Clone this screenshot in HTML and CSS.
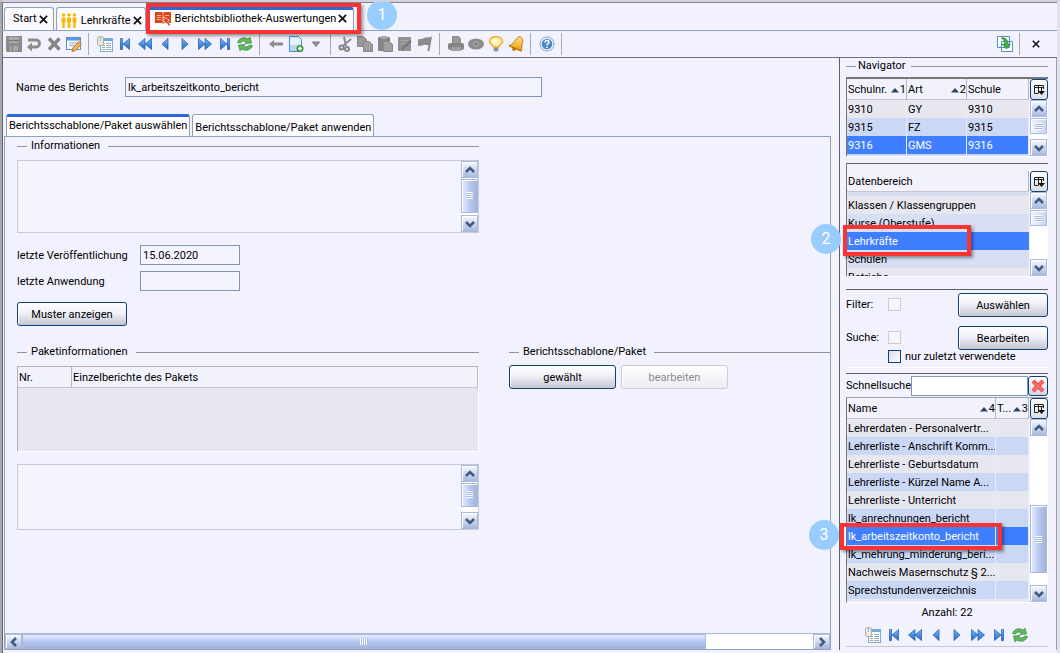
FILE: index.html
```
<!DOCTYPE html>
<html lang="de">
<head>
<meta charset="utf-8">
<title>Berichtsbibliothek-Auswertungen</title>
<link rel="stylesheet" href="styles.css">
</head>
<body>
<svg class="sprite" aria-hidden="true">
  <defs>
    <linearGradient id="blue" x1="0" y1="0" x2="0" y2="1"><stop offset="0" stop-color="#7db8f2"/><stop offset="1" stop-color="#1f66c8"/></linearGradient>
    <linearGradient id="gold" x1="0" y1="0" x2="0" y2="1"><stop offset="0" stop-color="#ffe27a"/><stop offset="1" stop-color="#e89a10"/></linearGradient>
  </defs>
  <symbol id="i-save" viewBox="0 0 16 16"><path fill="#8c8c8c" d="M0 0h16v16H1l-1-1z"/><path fill="#a9a9a9" d="M3 1h10v6H3zM4 10h8v5H4z"/><path stroke="#777" d="M3 4.500h10M6.500 10v5"/></symbol>
  <symbol id="i-undo" viewBox="0 0 16 16"><path fill="none" stroke="#8c8c8c" stroke-width="3" d="M2 4h8a3.500 3.500 0 0 1 0 7H5"/><path fill="#8c8c8c" d="M6 6.500v9L1 11z"/></symbol>
  <symbol id="i-delete" viewBox="0 0 16 16"><path stroke="#858585" stroke-width="3.500" d="M3 2.500l10.500 11M13.500 2.500L3 13.500"/></symbol>
  <symbol id="i-edit" viewBox="0 0 16 16"><rect x=".5" y="1.500" width="14" height="12" fill="#f4f9ff" stroke="#5c92cc"/><path fill="#5599e0" d="M1 2h13v2.500H1z"/><path stroke="#86aeda" d="M3 7h7M3 9.500h5"/><path fill="#f3b64b" stroke="#b5732a" d="M6.500 12.500l6-7 3 2.500-6 6.500-3.500 1z"/></symbol>
  <symbol id="i-table" viewBox="0 0 16 16"><rect x="3.500" y="2.500" width="12" height="13" fill="#fff" stroke="#7fa9d0"/><path stroke="#6faedb" stroke-width="2" d="M4 4h11"/><path stroke="#86b48a" d="M5 7.500h3M5 9.500h3M5 11.500h3M5 13.500h3"/><path stroke="#93addb" d="M9 7.500h5M9 9.500h5M9 11.500h5M9 13.500h5"/><rect x=".5" y=".5" width="6" height="9" rx="2" fill="#e9e9e2" stroke="#aaa"/><path stroke="#aaa" d="M3.500 1v4"/></symbol>
  <symbol id="i-first" viewBox="0 0 16 16"><path fill="url(#blue)" stroke="#2465bd" stroke-width=".8" d="M3.500 2.500h2v11h-2zM12.500 2.500v11L6 8z"/></symbol>
  <symbol id="i-rew" viewBox="0 0 16 16"><path fill="url(#blue)" stroke="#2465bd" stroke-width=".8" d="M8 2.500v11L1.500 8zM14.500 2.500v11L8 8z"/></symbol>
  <symbol id="i-prev" viewBox="0 0 16 16"><path fill="url(#blue)" stroke="#2465bd" stroke-width=".8" d="M11 2.500v11L5 8z"/></symbol>
  <symbol id="i-next" viewBox="0 0 16 16"><path fill="url(#blue)" stroke="#2465bd" stroke-width=".8" d="M5 2.500v11L11 8z"/></symbol>
  <symbol id="i-fwd" viewBox="0 0 16 16"><path fill="url(#blue)" stroke="#2465bd" stroke-width=".8" d="M1.500 2.500v11L8 8zM8 2.500v11L14.500 8z"/></symbol>
  <symbol id="i-last" viewBox="0 0 16 16"><path fill="url(#blue)" stroke="#2465bd" stroke-width=".8" d="M3.500 2.500v11L10 8zM10.500 2.500h2v11h-2z"/></symbol>
  <symbol id="i-refresh" viewBox="0 0 16 16"><path fill="#63b95c" stroke="#2f8438" stroke-width=".7" d="M.5 6.500C2 2 7 .5 11 3l2-1.700 1.500 5.700-6.500.5 1.500-1.700C7 4.500 4.500 5 3.500 7zM15.500 9.500C14 14 9 15.500 5 13l-2 1.700L1.500 9 8 8.500 6.500 10.200c2.500 1.300 5 .8 6-1.200z"/></symbol>
  <symbol id="i-back" viewBox="0 0 16 16"><path fill="#8c8c8c" d="M1 8l5-4v2.500h9v3H6V12z"/></symbol>
  <symbol id="i-new" viewBox="0 0 16 16"><path fill="#e8f3ff" stroke="#4a8fd6" d="M1.500.5h9l3 3v12h-12z"/><path fill="#b9d6f3" d="M2 9h11v6H2z"/><circle cx="12" cy="12.500" r="3.500" fill="#3d9a35"/><path stroke="#fff" stroke-width="1.500" d="M10 12.500h4M12 10.500v4"/></symbol>
  <symbol id="i-drop" viewBox="0 0 16 16"><path fill="#999" stroke="#777" d="M4.500 6h7L8 10.500z"/></symbol>
  <symbol id="i-cut" viewBox="0 0 16 16"><path stroke="#8c8c8c" stroke-width="2" d="M7 1l2 9M14 3L6 10"/><g fill="none" stroke="#858585" stroke-width="2"><circle cx="4.500" cy="11.500" r="2"/><circle cx="10" cy="13" r="2"/></g></symbol>
  <symbol id="i-copy" viewBox="0 0 16 16"><path fill="#999" stroke="#888" d="M.5.5h6l3 3v7h-9z"/><path fill="#a0a0a0" stroke="#888" d="M6.500 5.500h6l3 3v7h-9z"/></symbol>
  <symbol id="i-paste" viewBox="0 0 16 16"><rect x="1" y="1" width="12" height="14" rx="1" fill="#858585"/><path fill="#aaa" d="M4 0h6v3H4z"/><path fill="#a0a0a0" stroke="#888" d="M6.500 5.500h6l3 3v7h-9z"/></symbol>
  <symbol id="i-note" viewBox="0 0 16 16"><rect x="1" y="1" width="13" height="14" rx="1" fill="#919191"/><path stroke="#a6a6a6" d="M3 4.500h8M3 7.500h5"/><path stroke="#777" stroke-width="2" d="M5 13l9-8"/></symbol>
  <symbol id="i-flag" viewBox="0 0 16 16"><path fill="#8c8c8c" d="M1 3.500c2-1 4 0 6-1.500 2-1 4 0 8-1.500L12.500 15h-2.200L11.500 9c-2 .5-3-1-5 0-1.500 1-3 .5-5.500 1z"/></symbol>
  <symbol id="i-print" viewBox="0 0 16 16"><path fill="#999" stroke="#888" d="M4.500.5h6l2 2v5h-8z"/><rect x="0" y="7" width="16" height="7" rx="2" fill="#858585"/><path fill="#a0a0a0" d="M3 11h10v4H3z"/></symbol>
  <symbol id="i-eye" viewBox="0 0 16 16"><ellipse cx="8" cy="8" rx="8" ry="5.500" fill="#8c8c8c"/><circle cx="8" cy="8" r="3" fill="#a5a5a5"/><circle cx="8" cy="8" r="1.500" fill="#777"/></symbol>
  <symbol id="i-bulb" viewBox="0 0 16 16"><path fill="#ffeea0" stroke="#f0a83a" stroke-width="1.500" d="M5.500 11C5 9 1.500 8 1.500 5.500a6.500 5 0 0 1 13 0C14.500 8 11 9 10.500 11z"/><path fill="#fffbe0" d="M5 3h4v4H5z"/><path fill="#8c93a0" d="M5.500 11.500h5v2.500l-1 1.500h-3l-1-1.500z"/></symbol>
  <symbol id="i-bell" viewBox="0 0 16 16"><path fill="url(#gold)" stroke="#c77c0c" d="M12 .5c3.500 2 3 5.500 2 8l-.5 6.500L1 9.500C5 8.500 6 6 7.500 4 9 2 10 1 12 .5z"/><circle cx="6" cy="13" r="2" fill="#c77c0c"/><path stroke="#b56c08" d="M1 10l12 5"/></symbol>
  <symbol id="i-help" viewBox="0 0 16 16"><circle cx="8" cy="8" r="7" fill="#f4f8fd" stroke="#7fa3cc"/><circle cx="8" cy="8" r="5.300" fill="#4a86cc"/><path fill="none" stroke="#fff" stroke-width="1.500" d="M6 6.500c0-3 4-2.500 4-.3C10 7.500 8 7.500 8 9.200M8 10.500V12"/></symbol>
  <symbol id="i-export" viewBox="0 0 16 16"><path fill="#fff" stroke="#4e90ca" d="M.5.500h12v11H.5zM4.500 5.500h11v10h-11z"/><path fill="#49ad45" stroke="#2c8430" stroke-width=".6" d="M4 2c4-1 7 1 7 6h2.500L9.500 13 5 8h2.500C8 5.500 7 3.500 4 2z"/></symbol>
  <symbol id="i-close" viewBox="0 0 10 10"><path stroke="#111" stroke-width="2" d="M1 1l8 8M9 1L1 9"/></symbol>
  <symbol id="i-people" viewBox="0 0 16 16"><g fill="#f7b900"><circle cx="2.500" cy="2" r="1.700"/><circle cx="8" cy="2" r="1.700"/><circle cx="13.500" cy="2" r="1.700"/><path d="M.5 4.500h4v5h-.8V15H1.300V9.500H.5zM6 4.500h4v5h-.8V15H6.800V9.500H6zM11.500 4.500h4v5h-.8V15h-2.400V9.500h-.8z"/></g></symbol>
  <symbol id="i-book" viewBox="0 0 16 16"><path fill="#e0441c" d="M0 1h7l1 1 1-1h7v11H9l-1 1-1-1H0z"/><path stroke="#f6b8a4" d="M2 4.500h4M2 6.500h4M2 8.500h4M10 4.500h4M8 2v10"/><path fill="#d63e16" stroke="#fff" stroke-width=".6" d="M8.500 6l6 3-2 1 3 4-1.500 1.300-3-4-1.500 1.700z"/></symbol>
  <symbol id="i-columns" viewBox="0 0 12 12"><path fill="none" stroke="#222" d="M5 9.500H1.500v-8h9V5M1.500 3.500h9M5.500 1.500v8"/><path fill="#111" d="M5 7h7l-3.500 4zM8 4h1v3H8z"/></symbol>
  <symbol id="i-cross" viewBox="0 0 14 14"><path stroke="#dd4444" stroke-width="4" d="M2 2l10 10M12 2L2 12"/><path stroke="#ff6a62" stroke-width="2.500" d="M2 2l10 10M12 2L2 12"/></symbol>
  <symbol id="i-chev" viewBox="0 0 10 10"><path fill="none" stroke="#3f5a80" stroke-width="2.500" d="M1 7l4-4 4 4"/></symbol>
  <symbol id="i-sort" viewBox="0 0 8 5"><path fill="#2c4463" d="M4 0l4 4.500H0z"/></symbol>
</svg>

<div class="app">
  <nav class="tabs" aria-label="Fenster">
    <div class="tab"><span>Start</span><button class="tab-x" aria-label="Start schließen"><svg><use href="#i-close"/></svg></button></div>
    <div class="tab tab-low"><svg class="icon"><use href="#i-people"/></svg><span>Lehrkräfte</span><button class="tab-x" aria-label="Lehrkräfte schließen"><svg><use href="#i-close"/></svg></button></div>
    <div class="tab tab-active"><svg class="icon"><use href="#i-book"/></svg><span>Berichtsbibliothek-Auswertungen</span><button class="tab-x" aria-label="Auswertungen schließen"><svg><use href="#i-close"/></svg></button></div>
  </nav>

  <div class="toolbar">
    <button class="tool" aria-label="Speichern"><svg><use href="#i-save"/></svg></button>
    <button class="tool" aria-label="Rückgängig"><svg><use href="#i-undo"/></svg></button>
    <button class="tool" aria-label="Löschen"><svg><use href="#i-delete"/></svg></button>
    <button class="tool" aria-label="Bearbeiten"><svg><use href="#i-edit"/></svg></button>
    <i class="sep"></i>
    <button class="tool" aria-label="Liste"><svg><use href="#i-table"/></svg></button>
    <button class="tool" aria-label="Erster"><svg><use href="#i-first"/></svg></button>
    <button class="tool" aria-label="Schnell zurück"><svg><use href="#i-rew"/></svg></button>
    <button class="tool" aria-label="Zurück"><svg><use href="#i-prev"/></svg></button>
    <button class="tool" aria-label="Weiter"><svg><use href="#i-next"/></svg></button>
    <button class="tool" aria-label="Schnell vor"><svg><use href="#i-fwd"/></svg></button>
    <button class="tool" aria-label="Letzter"><svg><use href="#i-last"/></svg></button>
    <button class="tool" aria-label="Aktualisieren"><svg><use href="#i-refresh"/></svg></button>
    <i class="sep"></i>
    <button class="tool" aria-label="Pfeil links"><svg><use href="#i-back"/></svg></button>
    <button class="tool" aria-label="Neu"><svg><use href="#i-new"/></svg></button>
    <button class="tool" aria-label="Mehr"><svg><use href="#i-drop"/></svg></button>
    <i class="sep sep-tight"></i>
    <button class="tool" aria-label="Ausschneiden"><svg><use href="#i-cut"/></svg></button>
    <button class="tool" aria-label="Kopieren"><svg><use href="#i-copy"/></svg></button>
    <button class="tool" aria-label="Einfügen"><svg><use href="#i-paste"/></svg></button>
    <button class="tool" aria-label="Notiz"><svg><use href="#i-note"/></svg></button>
    <button class="tool" aria-label="Markieren"><svg><use href="#i-flag"/></svg></button>
    <i class="sep"></i>
    <button class="tool" aria-label="Drucken"><svg><use href="#i-print"/></svg></button>
    <button class="tool" aria-label="Vorschau"><svg><use href="#i-eye"/></svg></button>
    <button class="tool" aria-label="Hinweis"><svg><use href="#i-bulb"/></svg></button>
    <button class="tool" aria-label="Erinnerung"><svg><use href="#i-bell"/></svg></button>
    <i class="sep"></i>
    <button class="tool" aria-label="Hilfe"><svg><use href="#i-help"/></svg></button>
    <i class="sep"></i>
    <div class="tools-end">
      <button class="tool" aria-label="Exportieren"><svg><use href="#i-export"/></svg></button>
      <i class="sep"></i>
      <button class="tool tool-close" aria-label="Schließen"><svg><use href="#i-close"/></svg></button>
    </div>
  </div>

  <div class="body">
    <main class="main">
      <div class="name-row">
        <label for="name">Name des Berichts</label>
        <input class="field" id="name" type="text" value="lk_arbeitszeitkonto_bericht">
      </div>
      <div class="subtabs">
        <button class="subtab subtab-active">Berichtsschablone/Paket auswählen</button>
        <button class="subtab">Berichtsschablone/Paket anwenden</button>
      </div>
      <div class="sheet">
        <div class="sheet-content">
          <section class="col-left">
            <h2 class="legend">Informationen</h2>
            <div class="memo memo-info">
              <textarea aria-label="Informationen"></textarea>
              <div class="vbar">
                <button aria-label="Hoch"><svg><use href="#i-chev"/></svg></button>
                <div class="track"><i class="thumb" style="height:96%"></i></div>
                <button aria-label="Runter"><svg class="down"><use href="#i-chev"/></svg></button>
              </div>
            </div>
            <div class="dates">
              <label for="pub">letzte Veröffentlichung</label><input class="field" id="pub" type="text" value="15.06.2020">
              <label for="use">letzte Anwendung</label><input class="field" id="use" type="text">
            </div>
            <button class="btn btn-muster">Muster anzeigen</button>
          </section>
          <section class="col-left lower">
            <h2 class="legend">Paketinformationen</h2>
            <div class="packet">
              <table class="grid">
                <colgroup><col class="col-nr"><col></colgroup>
                <thead><tr><th>Nr.</th><th>Einzelberichte des Pakets</th></tr></thead>
              </table>
            </div>
            <div class="memo memo-packet">
              <textarea aria-label="Beschreibung"></textarea>
              <div class="vbar">
                <button aria-label="Hoch"><svg><use href="#i-chev"/></svg></button>
                <div class="track"><i class="thumb" style="height:84%"></i></div>
                <button aria-label="Runter"><svg class="down"><use href="#i-chev"/></svg></button>
              </div>
            </div>
          </section>
          <section class="col-right lower">
            <h2 class="legend">Berichtsschablone/Paket</h2>
            <div class="pair">
              <button class="btn">gewählt</button>
              <button class="btn" disabled>bearbeiten</button>
            </div>
          </section>
        </div>
        <div class="hbar">
          <button aria-label="Links"><svg class="left"><use href="#i-chev"/></svg></button>
          <div class="htrack"><i class="hthumb" style="width:86.5%"></i></div>
          <button aria-label="Rechts"><svg class="right"><use href="#i-chev"/></svg></button>
        </div>
      </div>
    </main>

    <aside class="nav">
      <h2 class="legend nav-legend">Navigator</h2>
      <div class="list list-schools">
        <table class="grid">
          <colgroup><col class="third"><col class="third"><col></colgroup>
          <thead><tr><th>Schulnr.<span class="sort"><svg><use href="#i-sort"/></svg>1</span></th><th>Art<span class="sort"><svg><use href="#i-sort"/></svg>2</span></th><th>Schule</th></tr></thead>
          <tbody>
            <tr><td>9310</td><td>GY</td><td>9310</td></tr>
            <tr><td>9315</td><td>FZ</td><td>9315</td></tr>
            <tr class="sel"><td>9316</td><td>GMS</td><td>9316</td></tr>
            <tr><td></td><td></td><td></td></tr>
          </tbody>
        </table>
        <div class="side">
          <button class="cols" aria-label="Spalten"><svg><use href="#i-columns"/></svg></button>
          <div class="vbar">
            <button aria-label="Hoch"><svg><use href="#i-chev"/></svg></button>
            <div class="track"><i class="thumb thumb-light"></i></div>
            <button aria-label="Runter"><svg class="down"><use href="#i-chev"/></svg></button>
          </div>
        </div>
      </div>

      <div class="list list-areas">
        <table class="grid">
          <thead><tr><th>Datenbereich</th></tr></thead>
          <tbody>
            <tr class="sliver"><td></td></tr>
            <tr><td>Klassen / Klassengruppen</td></tr>
            <tr><td>Kurse (Oberstufe)</td></tr>
            <tr class="sel"><td>Lehrkräfte</td></tr>
            <tr><td>Schulen</td></tr>
            <tr><td>Betriebe</td></tr>
          </tbody>
        </table>
        <div class="side">
          <button class="cols" aria-label="Spalten"><svg><use href="#i-columns"/></svg></button>
          <div class="vbar">
            <button aria-label="Hoch"><svg><use href="#i-chev"/></svg></button>
            <div class="track"><i class="thumb thumb-light"></i></div>
            <button aria-label="Runter"><svg class="down"><use href="#i-chev"/></svg></button>
          </div>
        </div>
      </div>

      <div class="filters">
        <label for="filter">Filter:</label><input id="filter" type="checkbox" disabled><button class="btn">Auswählen</button>
        <label for="search">Suche:</label><input id="search" type="checkbox" disabled><button class="btn">Bearbeiten</button>
        <input id="recent" class="recent" type="checkbox"><label class="recent-label" for="recent">nur zuletzt verwendete</label>
      </div>

      <div class="quick">
        <label for="quick">Schnellsuche</label>
        <input class="field" id="quick" type="text">
        <button class="clear" aria-label="Suche leeren"><svg><use href="#i-cross"/></svg></button>
      </div>
      <div class="list list-reports">
        <table class="grid">
          <colgroup><col><col class="col-type"></colgroup>
          <thead><tr><th>Name<span class="sort"><svg><use href="#i-sort"/></svg>4</span></th><th>T...<span class="sort"><svg><use href="#i-sort"/></svg>3</span></th></tr></thead>
          <tbody>
            <tr><td>Lehrerdaten - Personalvertr...</td><td></td></tr>
            <tr><td>Lehrerliste - Anschrift Komm...</td><td></td></tr>
            <tr><td>Lehrerliste - Geburtsdatum</td><td></td></tr>
            <tr><td>Lehrerliste - Kürzel Name A...</td><td></td></tr>
            <tr><td>Lehrerliste - Unterricht</td><td></td></tr>
            <tr><td>lk_anrechnungen_bericht</td><td></td></tr>
            <tr class="sel"><td>lk_arbeitszeitkonto_bericht</td><td></td></tr>
            <tr><td>lk_mehrung_minderung_beri...</td><td></td></tr>
            <tr><td>Nachweis Masernschutz § 2...</td><td></td></tr>
            <tr><td>Sprechstundenverzeichnis</td><td></td></tr>
            <tr><td></td><td></td></tr>
          </tbody>
        </table>
        <div class="side">
          <button class="cols" aria-label="Spalten"><svg><use href="#i-columns"/></svg></button>
          <div class="vbar">
            <button aria-label="Hoch"><svg><use href="#i-chev"/></svg></button>
            <div class="track track-end"><i class="thumb" style="height:50%"></i></div>
            <button aria-label="Runter"><svg class="down"><use href="#i-chev"/></svg></button>
          </div>
        </div>
      </div>
      <p class="count">Anzahl: 22</p>
      <div class="pager">
        <button class="tool" aria-label="Liste"><svg><use href="#i-table"/></svg></button>
        <button class="tool" aria-label="Erster"><svg><use href="#i-first"/></svg></button>
        <button class="tool" aria-label="Schnell zurück"><svg><use href="#i-rew"/></svg></button>
        <button class="tool" aria-label="Zurück"><svg><use href="#i-prev"/></svg></button>
        <button class="tool" aria-label="Weiter"><svg><use href="#i-next"/></svg></button>
        <button class="tool" aria-label="Schnell vor"><svg><use href="#i-fwd"/></svg></button>
        <button class="tool" aria-label="Letzter"><svg><use href="#i-last"/></svg></button>
        <button class="tool" aria-label="Aktualisieren"><svg><use href="#i-refresh"/></svg></button>
      </div>
    </aside>
  </div>

  <div class="mark mark-1"></div><div class="badge badge-1">1</div>
  <div class="mark mark-2"></div><div class="badge badge-2">2</div>
  <div class="mark mark-3"></div><div class="badge badge-3">3</div>
</div>
</body>
</html>
```
FILE: styles.css
```
* { box-sizing: border-box; }
body {
  margin: 0;
  background: #f2f2ff;
  color: #000;
  font: 11px/16px Roboto, "Open Sans", sans-serif;
}
button, input, textarea { font: inherit; color: inherit; margin: 0; padding: 0; }
button { border: 0; background: none; white-space: nowrap; }
h2, p { margin: 0; font: inherit; }
svg { display: block; }
.sprite { position: absolute; width: 0; height: 0; }

.app {
  position: relative;
  display: flex;
  flex-direction: column;
  height: 100vh;
  overflow: hidden;
  border-top: 2px solid #d2d2df;
  border-left: 2px solid #a8a8a8;
  border-right: 3px solid #e2e2ee;
}

/* Window tabs */
.tabs {
  display: flex;
  align-items: flex-end;
  gap: 2px;
  height: 29px;
  padding-left: 1px;
  border-top: 1px solid #85858f;
  border-bottom: 1px solid #8ea3bb;
  border-left: 1px solid #6c7580;
}
.tab {
  display: flex;
  align-items: center;
  height: 23px;
  padding: 0 4px;
  border: 1px solid #8ea3bb;
  border-bottom: 0;
  border-radius: 3px 3px 0 0;
  background: #fafaff;
}
.tab:first-child { padding: 0 5px 0 8px; }
.tab-low { padding: 3px 3px 0 4px; }
.tab-active { border-top: 3px solid #2f66d8; background: #fff; padding: 0 6px 3px; }
.icon { width: 16px; height: 16px; margin-right: 4px; }
.tab-x { margin-left: 2px; }
.tab-x svg { width: 9px; height: 9px; }

/* Toolbar */
.toolbar {
  display: flex;
  align-items: center;
  height: 27px;
  padding-left: 1px;
  border-left: 1px solid #6c7580;
  border-bottom: 1px solid #707078;
}
.tool { width: 20px; height: 20px; display: grid; place-items: center; flex: none; }
.tool svg { width: 16px; height: 16px; }
.sep { width: 1px; height: 22px; margin: 0 6px 0 4px; background: #a8a8b0; }
.sep-tight { margin-right: 4px; }
.tools-end {
  display: flex;
  align-items: center;
  margin-left: auto;
  padding-right: 11px;
}
.tool-close svg { width: 8px; height: 8px; }

.body { flex: 1; min-height: 0; display: flex; gap: 5px; }

/* Report form */
.main {
  flex: 1;
  min-width: 0;
  display: flex;
  flex-direction: column;
  padding: 19px 2px 3px 1px;
  border-left: 1px solid #5c6672;
  border-right: 1px solid #fff;
}
.name-row { display: flex; align-items: center; padding-left: 12px; }
.name-row label { width: 109px; padding-top: 1px; }
.name-row .field { width: 417px; max-width: 80%; }
.field {
  height: 20px;
  padding: 0 2px;
  border: 1px solid #7d98b8;
  background: #f4f4ff;
  min-width: 0;
}
.subtabs { display: flex; gap: 2px; align-items: flex-end; margin-top: 17px; padding-left: 2px; }
.subtab {
  height: 22px;
  padding: 4px 2px 0;
  border: 1px solid #8ea3bb;
  border-bottom: 0;
  border-radius: 3px 3px 0 0;
  background: #fafaff;
}
.subtab-active { padding: 0 2px 1px; border-top: 3px solid #2f66d8; background: #fff; }
.sheet {
  flex: 1;
  min-height: 0;
  display: flex;
  flex-direction: column;
  border: 1px solid #8ea3bb;
}
.sheet-content {
  flex: 1;
  min-height: 0;
  overflow: hidden;
  display: grid;
  grid-template-columns: 462px 1fr;
  grid-template-rows: auto 1fr;
  column-gap: 30px;
  padding: 1px 0 0 12px;
}
.col-left { grid-column: 1; }
.col-right { grid-column: 2; }
.lower { grid-row: 2; margin-top: 18px; }
.legend { display: flex; align-items: center; height: 16px; gap: 4px; line-height: 18px; white-space: nowrap; }
.legend::before, .legend::after { content: ""; height: 1px; background: #94949c; }
.legend::before { width: 10px; }
.legend::after { flex: 1; margin-left: 4px; }
.nav-legend { gap: 2px; }

.memo { display: flex; border: 1px solid #c8c8d6; background: #f4f4ff; }
.memo textarea { flex: 1; border: 0; resize: none; background: transparent; }
.memo-info { height: 73px; margin-top: 6px; }
.memo-packet { height: 66px; margin-top: 12px; }

.dates {
  display: grid;
  grid-template-columns: 123px 100px;
  align-items: center;
  row-gap: 6px;
  margin-top: 12px;
}
.dates label { padding-top: 1px; }
.btn {
  height: 24px;
  padding-top: 2px;
  border: 1px solid #123f78;
  border-radius: 3px;
  background: linear-gradient(#fff, #f0f0f8 45%, #c6c6d2);
  box-shadow: inset 1px 1px #fff;
}
.btn:disabled { border-color: #ccccd6; color: #8c8c94; background: linear-gradient(#fff, #ececf2); }
.btn-muster { width: 110px; margin-top: 11px; }
.pair { display: flex; gap: 5px; margin-top: 5px; }
.pair .btn { width: 107px; }
.packet {
  height: 86px;
  margin-top: 6px;
  border: 1px solid #b0b0b8;
  border-right-color: #fff;
  border-bottom-color: #fff;
  background: #e7e7f0;
}

/* Tables */
.grid { width: 100%; border-collapse: separate; border-spacing: 0; table-layout: fixed; }
.grid th, .grid td { padding: 1px 0 0 1px; text-align: left; font-weight: 400; white-space: nowrap; overflow: hidden; }
.grid th { height: 21px; padding-top: 2px; background: #f2f2fc; border-right: 1px solid #b8b8c4; border-bottom: 1px solid #c4c4d0; }
.grid td { height: 18px; border-right: 1px solid #e8ecf8; }
.grid tbody tr { background: #e7e7f0; }
.grid tbody tr:nth-child(even) { background: #cbd8f5; }
.list-areas .grid tbody tr:nth-child(odd) { background: #d8def3; }
.list-areas .grid tbody tr:nth-child(even) { background: #e7e7f0; }
.list .grid tbody tr.sel:nth-child(n) { background: #3f7fff; color: #fff; }
.list-areas .grid td { border-right: 0; }
.grid .sliver td { height: 4px; line-height: 0; }
.col-nr { width: 54px; }
.third { width: 60px; }
.col-type { width: 33px; }
.sort { float: right; display: flex; align-items: center; gap: 1px; }
.sort svg { width: 8px; height: 5px; }

.list {
  display: flex;
  align-items: stretch;
  overflow: hidden;
  flex: none;
  border-left: 1px solid #777;
  border-bottom: 1px solid #fff;
}
.list .grid { flex: 1; width: 0; align-self: flex-start; }
.side { width: 18px; margin-left: 1px; display: flex; flex-direction: column; }
.cols {
  height: 21px;
  flex: none;
  display: grid;
  place-items: center;
  border: 1px solid #123f78;
  border-radius: 3px;
  background: linear-gradient(#fff, #dcdce6);
}
.cols svg { width: 12px; height: 12px; }

/* Scroll bars */
.vbar { flex: 1; min-height: 0; display: flex; flex-direction: column; background: #fff; }
.memo .vbar { flex: none; width: 17px; }
.vbar button, .hbar button {
  width: 17px;
  height: 17px;
  flex: none;
  display: grid;
  place-items: center;
  border: 1px solid #a9b9df;
  background: linear-gradient(#f6f8ff, #a9b9dd);
  box-shadow: inset 1px 1px #fff;
}
.vbar svg, .hbar svg { width: 10px; height: 10px; }
.down { transform: rotate(180deg); }
.left { transform: rotate(-90deg); }
.right { transform: rotate(90deg); }
.track { flex: 1; min-height: 0; display: flex; flex-direction: column; padding: 1px 0; }
.track-end { justify-content: flex-end; padding-bottom: 12px; }
.thumb {
  width: 17px;
  min-height: 16px;
  display: grid;
  place-items: center;
  border: 1px solid #a9b9df;
  background: linear-gradient(90deg, #e4ebff, #b4c4ee 60%, #a3b3d8);
  box-shadow: inset 1px 1px #fff;
}
.thumb-light { background: linear-gradient(90deg, #f2f5ff, #c8d5f5); }
.thumb::after {
  content: "";
  width: 7px;
  height: 7px;
  background: repeating-linear-gradient(#fff 0 1px, #a6b7e3 1px 2px);
}
.hbar { display: flex; border-top: 1px solid #a9b9df; background: #fff; }
.hbar button { height: 15px; }
.htrack { flex: 1; }
.hthumb {
  height: 15px;
  display: grid;
  place-items: center;
  border: 1px solid #a9b9df;
  background: linear-gradient(#e6edff, #b7c8f3 50%, #a3b3d8);
}
.hthumb::after {
  content: "";
  width: 8px;
  height: 7px;
  background: repeating-linear-gradient(90deg, #fff 0 1px, #a6b7e3 1px 2px);
}

/* Navigator */
.nav {
  width: 218px;
  flex: none;
  display: flex;
  flex-direction: column;
  margin-bottom: 3px;
  padding: 0 8px 3px 6px;
  border-left: 1px solid #606068;
  border-right: 1px solid #8ea3bb;
}
.list-schools { height: 80px; border-top: 2px solid #777; margin-top: 3px; }
.list-areas { height: 114px; margin-top: 6px; padding-top: 7px; border-top: 1px solid #606068; }
.filters {
  display: grid;
  grid-template-columns: 42px 13px 1fr 90px;
  align-items: center;
  margin-top: 12px;
  padding: 3px 0;
  border-top: 1px solid #606068;
  border-bottom: 1px solid #fff;
}
.filters .btn { grid-column: 4; margin-bottom: 9px; }
.filters label { height: 24px; line-height: 24px; align-self: start; }
.filters input { align-self: start; margin-top: 5px; }
.filters input[type="checkbox"] {
  appearance: none;
  width: 13px;
  height: 13px;
  border: 1px solid #123f78;
  background: linear-gradient(135deg, #dcdce4, #fff);
}
.filters input[type="checkbox"]:disabled { border-color: #ccccd6; background: #f6f6fa; }
.filters .recent { grid-column: 2; margin: -9px 0 0; }
.filters .recent-label { grid-column: 3 / 5; height: 14px; line-height: 14px; margin: -9px 0 0 4px; }
.quick {
  display: flex;
  align-items: center;
  margin-top: 5px;
  padding-top: 2px;
  border-top: 1px solid #606068;
}
.quick label { width: 63px; }
.quick .field { flex: 1; margin-left: 2px; background: #fff; }
.clear {
  width: 20px;
  height: 20px;
  display: grid;
  place-items: center;
  border: 1px solid #123f78;
  border-radius: 3px;
  background: linear-gradient(#fff, #d4d4de);
}
.clear svg { width: 14px; height: 14px; }
.list-reports { flex: 1; min-height: 0; margin-top: 1px; border-top: 1px solid #a0a0a8; }
.count { text-align: center; margin-top: 2px; }
.pager {
  display: flex;
  justify-content: center;
  gap: 1px;
  margin-top: 4px;
  padding-right: 2px;
  padding-bottom: 1px;
  border-bottom: 1px solid #c8c8d6;
}

/* Step markers lying over the window */
.mark {
  position: absolute;
  border: 4px solid #fb3333;
  box-shadow: 2px 2px 3px #0006;
}
.mark-1 { left: 144px; top: 1px; width: 215px; height: 31px; }
.mark-2 { right: 86px; top: 223px; width: 128px; height: 31px; }
.mark-3 { right: 55px; top: 521px; width: 162px; height: 27px; }
.badge {
  position: absolute;
  width: 30px;
  height: 30px;
  border-radius: 50%;
  background: #99ccff;
  color: #fff;
  font-size: 16px;
  line-height: 30px;
  text-align: center;
}
.badge-1 { left: 365px; top: -2px; }
.badge-2 { right: 216px; top: 222px; }
.badge-3 { right: 218px; top: 518px; }
```
